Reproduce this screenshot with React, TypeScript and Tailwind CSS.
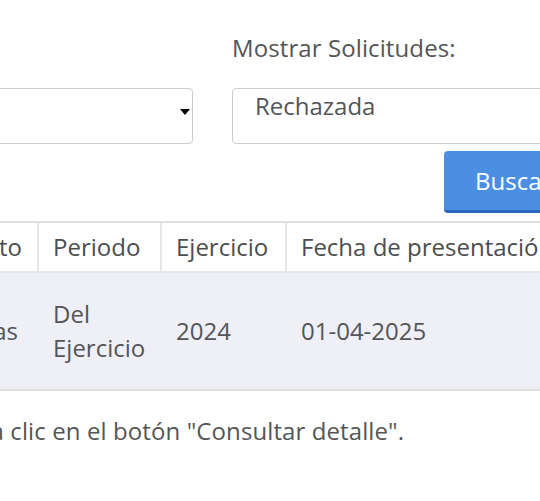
export default function App() {
  return (
    <div className="h-[501px] w-[540px] overflow-hidden bg-white pt-[31px] font-['Open_Sans',sans-serif] text-[24px] leading-[34px] text-[#555]">
      {/* filtros */}
      <div className="-ml-[150px] flex items-end gap-[39px]">
        <div className="w-[343px] shrink-0">
          <div className="relative h-[56px] rounded-[4px] border border-[#ccc] bg-white">
            <span className="absolute right-[2px] top-[20px] h-0 w-0 border-x-[5px] border-t-[6px] border-x-transparent border-t-black" />
          </div>
        </div>
        <div className="w-[360px] shrink-0">
          <label className="block tracking-[0.1px]">Mostrar Solicitudes:</label>
          <div className="mt-[23px] h-[56px] rounded-[4px] border border-[#ccc] bg-white pl-[22px]">
            Rechazada
          </div>
        </div>
      </div>

      <div className="mt-[7px] flex pl-[444px]">
        <button
          type="button"
          className="h-[62px] shrink-0 rounded-[4px] border-b-[3px] border-[#2b67b8] bg-[#4a8fe1] px-[31px] text-[24px] text-white"
        >
          Buscar
        </button>
      </div>

      {/* resultados */}
      <div className="mt-[8px] -ml-[162px] w-[900px] border-y-2 border-[#dedede]">
        <div className="grid grid-cols-[199px_123px_125px_1fr] border-b-2 border-[#e6e6e6] font-medium text-[#4d4d4d]">
          <div className="overflow-hidden whitespace-nowrap py-[7px] pr-[15px] text-right">Concepto</div>
          <div className="whitespace-nowrap border-l-2 border-[#e6e6e6] px-[14px] py-[7px]">Periodo</div>
          <div className="whitespace-nowrap border-l-2 border-[#e6e6e6] px-[14px] py-[7px]">Ejercicio</div>
          <div className="whitespace-nowrap border-l-2 border-[#e6e6e6] px-[14px] py-[7px]">
            Fecha de presentación
          </div>
        </div>
        <div className="grid grid-cols-[199px_123px_125px_1fr] items-center bg-[#eeeff7]">
          <div className="overflow-hidden whitespace-nowrap pr-[19px] text-right">Pérdidas</div>
          <div className="py-[24px] pl-[16px] pr-[14px]">
            Del
            <br />
            Ejercicio
          </div>
          <div className="pl-[16px]">2024</div>
          <div className="pl-[16px]">01-04-2025</div>
        </div>
      </div>

      <p className="mt-[23px] flex whitespace-nowrap tracking-[0.1px]">
        <span className="-ml-[56px] inline-block w-[60px] shrink-0 text-right">Haga</span>
        <span>&nbsp;clic en el botón "Consultar detalle".</span>
      </p>
    </div>
  );
}
